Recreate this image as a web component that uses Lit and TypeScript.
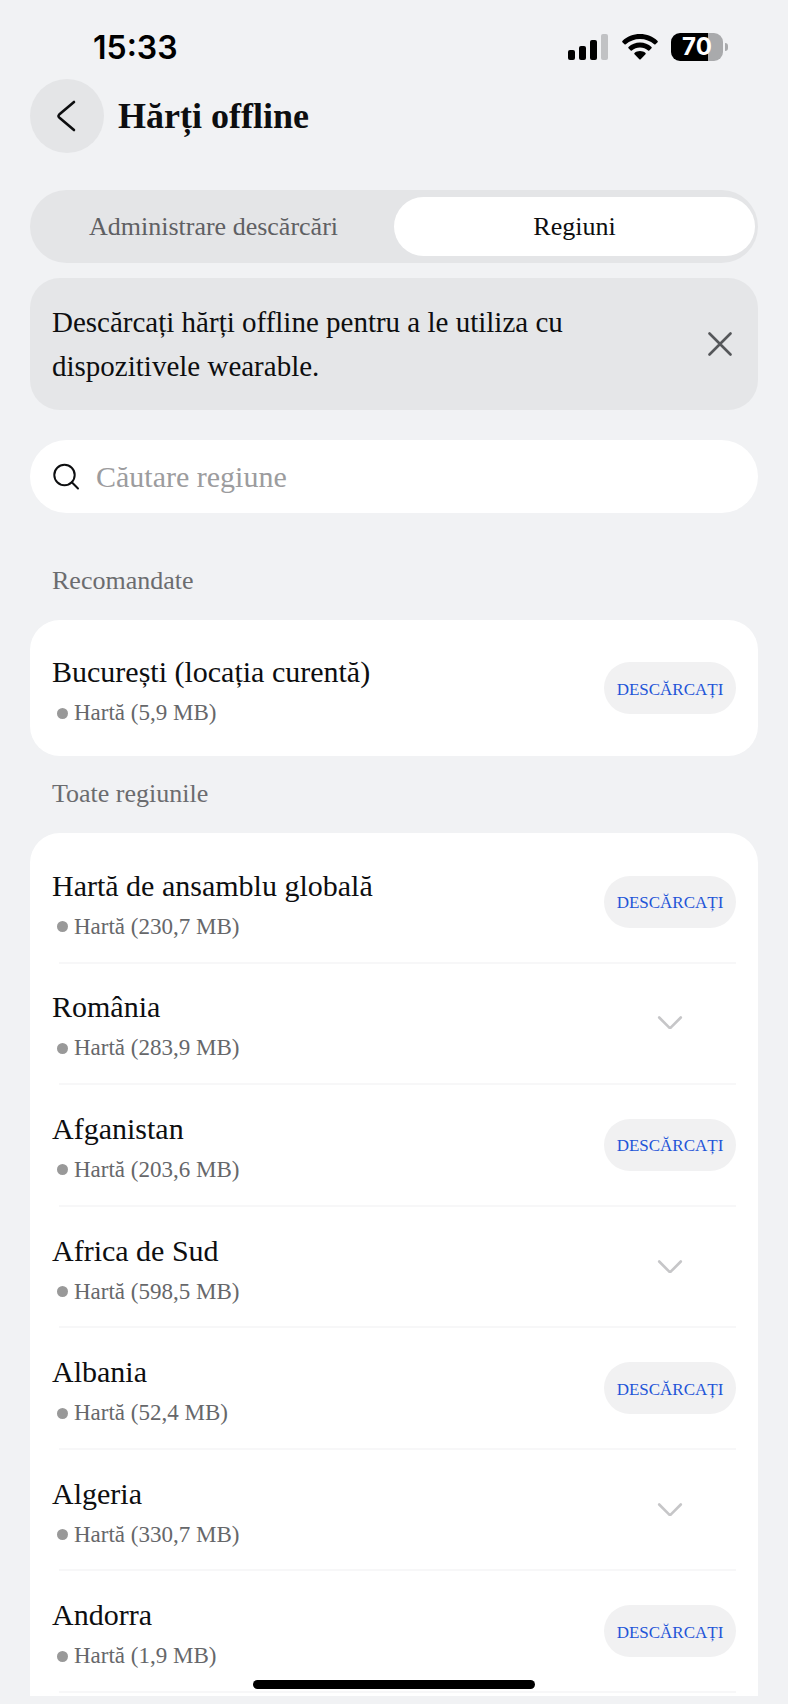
import { LitElement, html, css, nothing } from "lit";
import { customElement, property, state } from "lit/decorators.js";
import { classMap } from "lit/directives/class-map.js";

interface Region {
  name: string;
  size: string;
  expandable?: boolean;
}

const RECOMMENDED: Region[] = [{ name: "București (locația curentă)", size: "5,9 MB" }];

const REGIONS: Region[] = [
  { name: "Hartă de ansamblu globală", size: "230,7 MB" },
  { name: "România", size: "283,9 MB", expandable: true },
  { name: "Afganistan", size: "203,6 MB" },
  { name: "Africa de Sud", size: "598,5 MB", expandable: true },
  { name: "Albania", size: "52,4 MB" },
  { name: "Algeria", size: "330,7 MB", expandable: true },
  { name: "Andorra", size: "1,9 MB" },
];

@customElement("status-bar")
class StatusBar extends LitElement {
  static styles = css`
    :host {
      display: flex;
      align-items: center;
      justify-content: space-between;
      height: 63px;
      padding: 16px 60px 0 93px;
      font-family: Inter, "Liberation Sans", sans-serif;
      color: #000;
    }
    .time {
      font-size: 32px;
      line-height: 40px;
      font-weight: 600;
    }
    .icons {
      display: flex;
      align-items: center;
      gap: 13px;
      padding-bottom: 2px;
    }
    svg {
      display: block;
    }
    .battery {
      display: flex;
      align-items: center;
      gap: 2px;
    }
    .cell {
      width: 52px;
      height: 28px;
      border-radius: 9px;
      background: linear-gradient(to right, #000 37px, #a9aaac 37px);
      color: #fff;
      font-size: 24px;
      line-height: 28px;
      font-weight: 700;
      text-align: center;
    }
    .nub {
      width: 3px;
      height: 8px;
      border-radius: 0 4px 4px 0;
      background: #a9aaac;
    }
  `;

  render() {
    return html`
      <span class="time">15:33</span>
      <div class="icons">
        <svg width="41" height="26" viewBox="0 0 41 26" aria-hidden="true">
          <rect x="0" y="16" width="7" height="10" rx="2" />
          <rect x="11" y="12" width="7" height="14" rx="2" />
          <rect x="22" y="6" width="7" height="20" rx="2" />
          <rect x="33" y="0" width="7" height="26" rx="2" fill="#c1c2c4" />
        </svg>
        <svg width="36" height="26" viewBox="0 0 36 26" aria-hidden="true">
          <path d="M18 0C11.2 0 5 2.6.4 6.9c-.4.4-.4.9 0 1.3l2.1 2.1c.4.4.9.4 1.3 0C7.6 6.9 12.600 4.900 18 4.900s10.400 2 14.200 5.400c.4.4.9.4 1.300 0l2.100-2.100c.4-.4.4-.9 0-1.300C31 2.600 24.800 0 18 0z" />
          <path d="M18 8.600c-4.400 0-8.400 1.600-11.500 4.300-.4.4-.4.9 0 1.300l2.200 2.200c.4.300.8.300 1.200 0 2.200-1.800 5-2.900 8.100-2.900s5.900 1.100 8.100 2.900c.4.300.8.300 1.200 0l2.200-2.200c.4-.4.4-.9 0-1.300C26.400 10.200 22.400 8.600 18 8.600z" />
          <path d="M18 17c-2.100 0-4 .7-5.500 1.900-.4.300-.4.900 0 1.300l4.800 5c.4.400 1 .400 1.400 0l4.800-5c.4-.4.400-1 0-1.300C22 17.700 20.100 17 18 17z" />
        </svg>
        <div class="battery">
          <div class="cell">70</div>
          <div class="nub"></div>
        </div>
      </div>
    `;
  }
}

@customElement("region-row")
class RegionRow extends LitElement {
  @property({ attribute: false }) region!: Region;

  static styles = css`
    :host {
      display: flex;
      align-items: center;
      justify-content: space-between;
      gap: 16px;
      padding: 20px 0;
    }
    .text {
      padding-top: 5px;
    }
    .name {
      font-size: 30px;
      line-height: 36px;
      color: #0d0e10;
    }
    .meta {
      display: flex;
      align-items: center;
      gap: 6px;
      margin-top: 9px;
      padding-left: 5px;
      font-size: 23px;
      line-height: 28px;
      color: #66676a;
    }
    .dot {
      width: 11px;
      height: 11px;
      border-radius: 50%;
      background: #999;
    }
    button {
      flex: none;
      display: flex;
      align-items: center;
      justify-content: center;
      width: 132px;
      height: 52px;
      padding: 0;
      border: 0;
      border-radius: 26px;
      font: inherit;
      cursor: pointer;
    }
    .download {
      padding-top: 3px;
      background: #f1f1f2;
      color: #1f55d8;
      font-size: 17px;
      line-height: 20px;
    }
    .expand {
      background: none;
    }
  `;

  render() {
    const { name, size, expandable } = this.region;
    return html`
      <div class="text">
        <div class="name">${name}</div>
        <div class="meta"><span class="dot"></span>Hartă (${size})</div>
      </div>
      ${expandable
        ? html`<button class="expand" aria-label="Extindeți ${name}" aria-expanded="false">
            <svg width="26" height="14" viewBox="0 0 26 14" fill="none" stroke="#c6c6c8" stroke-width="2.600" stroke-linecap="round" stroke-linejoin="round">
              <path d="M2.200 1.500 11.800 11.200q1.200 1 2.400 0L23.800 1.500" />
            </svg>
          </button>`
        : html`<button class="download">DESCĂRCAȚI</button>`}
    `;
  }
}

@customElement("app-root")
class AppRoot extends LitElement {
  @state() private tab = 1;
  @state() private showTip = true;

  static styles = css`
    :host {
      display: flex;
      flex-direction: column;
      box-sizing: border-box;
      min-height: 100vh;
      padding-bottom: 8px;
      background: #f1f2f4;
      font-family: "Liberation Serif", serif;
      color: #0d0e10;
    }
    main {
      flex: 1;
      display: flex;
      flex-direction: column;
      padding: 0 30px;
    }
    button {
      border: 0;
      padding: 0;
      font: inherit;
      color: inherit;
      cursor: pointer;
    }
    svg {
      display: block;
    }
    header {
      display: flex;
      align-items: center;
      gap: 14px;
    }
    .back {
      display: flex;
      align-items: center;
      justify-content: center;
      width: 74px;
      height: 74px;
      border-radius: 50%;
      background: #e4e5e7;
    }
    h1 {
      margin: 0;
      font-size: 36px;
      line-height: 44px;
    }
    .tabs {
      display: flex;
      margin-top: 37px;
      padding: 7px 3px;
      border-radius: 37px;
      background: #e4e5e7;
    }
    .tab {
      flex: 1;
      height: 59px;
      border-radius: 30px;
      background: none;
      font-size: 26px;
      line-height: 30px;
      color: #5f6063;
    }
    .tab.selected {
      background: #fff;
      color: #0d0e10;
    }
    .tip {
      display: flex;
      align-items: center;
      justify-content: space-between;
      gap: 22px;
      margin-top: 15px;
      padding: 22px;
      border-radius: 30px;
      background: #e5e6e8;
    }
    .tip p {
      flex: 1;
      max-width: 540px;
      margin: 0;
      font-size: 29px;
      line-height: 44px;
    }
    .close {
      padding: 4px;
      background: none;
    }
    .search {
      display: flex;
      align-items: center;
      gap: 16px;
      height: 73px;
      margin: 30px 0;
      padding: 0 23px;
      border-radius: 37px;
      background: #fff;
    }
    .search input {
      flex: 1;
      min-width: 0;
      padding: 0;
      border: 0;
      outline: 0;
      background: none;
      font: inherit;
      font-size: 30px;
      line-height: 36px;
      color: inherit;
    }
    .search input::placeholder {
      color: #9c9c9e;
      opacity: 1;
    }
    h2 {
      margin: 0;
      padding: 23px 22px 24px;
      font-size: 26px;
      line-height: 30px;
      font-weight: 400;
      color: #6b6c6f;
    }
    ul {
      list-style: none;
      margin: 0;
      padding: 9px 22px;
      border-radius: 30px;
      background: #fff;
    }
    .all {
      flex: 1;
      display: flex;
      flex-direction: column;
      padding-bottom: 3px;
      border-radius: 30px 30px 0 0;
    }
    .all li {
      flex: 1;
      display: flex;
      flex-direction: column;
    }
    .all region-row {
      flex: 1;
    }
    .all li::after {
      content: "";
      height: 2px;
      margin-left: 7px;
      background: #f7f7f8;
    }
    .home {
      position: fixed;
      bottom: 15px;
      left: 50%;
      width: 282px;
      height: 9px;
      border-radius: 5px;
      background: #000;
      transform: translateX(-50%);
    }
  `;

  private renderRows(regions: Region[]) {
    return regions.map((r) => html`<li><region-row .region=${r}></region-row></li>`);
  }

  render() {
    return html`
      <status-bar></status-bar>
      <main>
        <header>
          <button class="back" aria-label="Înapoi">
            <svg width="20" height="32" viewBox="0 0 20 32" fill="none" stroke="#0d0e10" stroke-width="2.600" stroke-linecap="round" stroke-linejoin="round">
              <path d="M17 2 2.200 14.600q-1.500 1.400 0 2.800L17 30" />
            </svg>
          </button>
          <h1>Hărți offline</h1>
        </header>

        <div class="tabs" role="tablist">
          ${["Administrare descărcări", "Regiuni"].map(
            (label, i) => html`<button
              role="tab"
              class=${classMap({ tab: true, selected: this.tab === i })}
              aria-selected=${this.tab === i ? "true" : "false"}
              @click=${() => (this.tab = i)}
            >${label}</button>`
          )}
        </div>

        ${this.showTip
          ? html`<div class="tip">
              <p>Descărcați hărți offline pentru a le utiliza cu dispozitivele wearable.</p>
              <button class="close" aria-label="Închideți" @click=${() => (this.showTip = false)}>
                <svg width="26" height="26" viewBox="0 0 26 26" fill="none" stroke="#55575a" stroke-width="2.600" stroke-linecap="round">
                  <path d="M3.500 2.500l21 21M24.500 2.500l-21 21" />
                </svg>
              </button>
            </div>`
          : nothing}

        <label class="search">
          <svg width="27" height="27" viewBox="0 0 27 27" fill="none" stroke="#0d0e10" stroke-width="2" stroke-linecap="round" aria-hidden="true">
            <circle cx="11.500" cy="12" r="10.200" />
            <path d="M18.800 19.300 25 25.500" />
          </svg>
          <input type="text" placeholder="Căutare regiune" aria-label="Căutare regiune" />
        </label>

        <h2>Recomandate</h2>
        <ul>${this.renderRows(RECOMMENDED)}</ul>

        <h2>Toate regiunile</h2>
        <ul class="all">${this.renderRows(REGIONS)}</ul>
      </main>
      <div class="home"></div>
    `;
  }
}
